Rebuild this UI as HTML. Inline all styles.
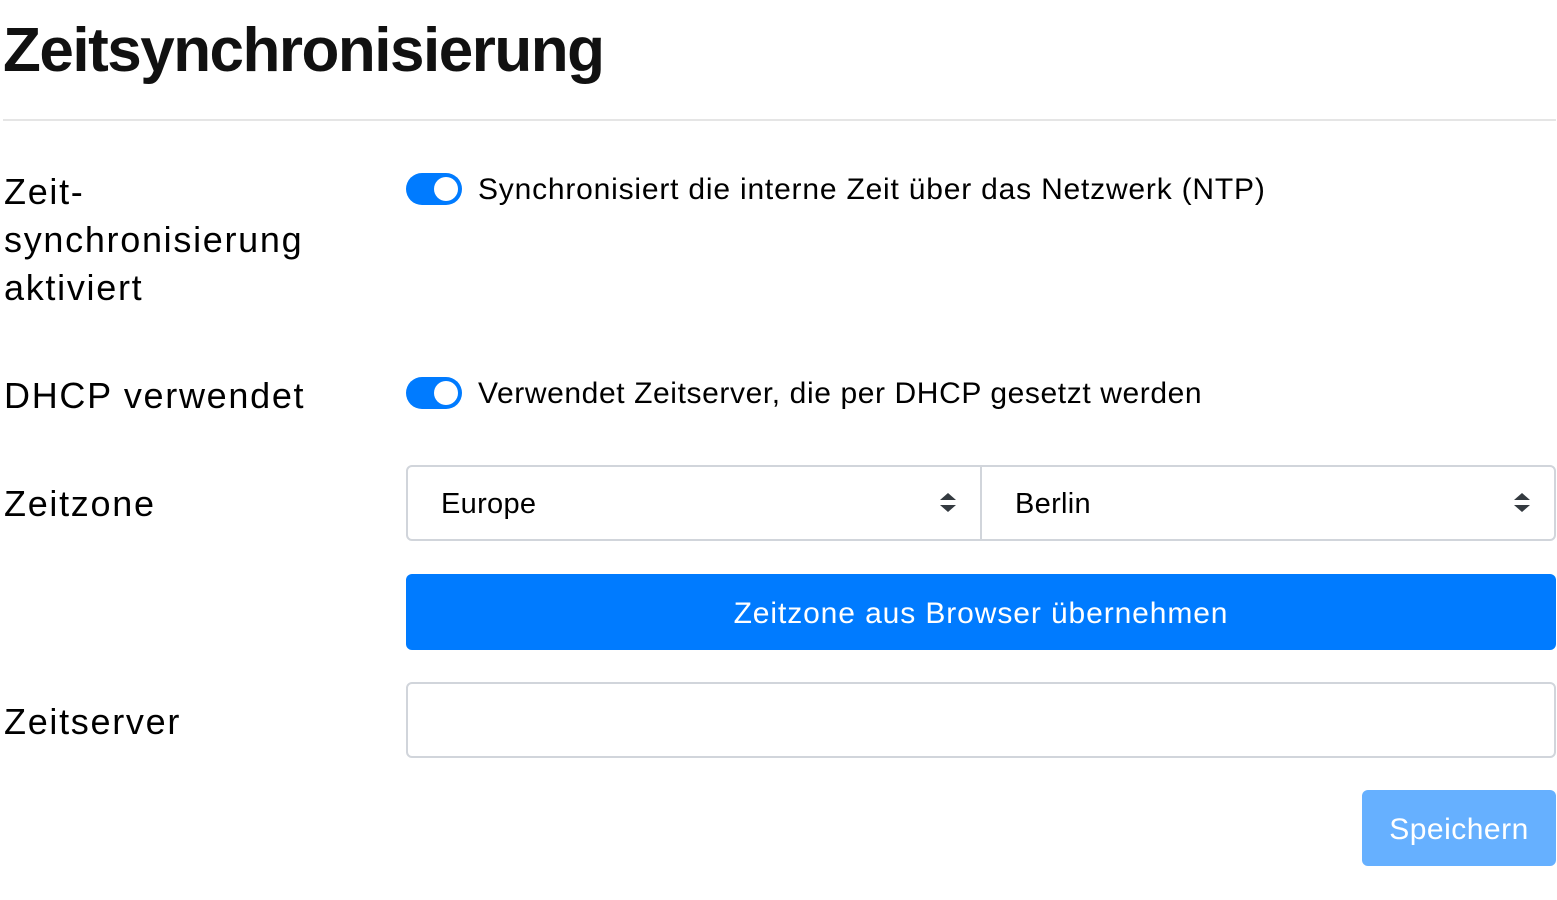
<!DOCTYPE html>
<html><head><meta charset="utf-8"><style>
body{margin:0;background:#fff;font-family:"Liberation Sans",sans-serif;color:#000;width:1557px;height:900px;overflow:hidden;position:relative}
.a{position:absolute}
h1{position:absolute;left:3px;top:14px;margin:0;font-size:62px;font-weight:bold;letter-spacing:-1.5px;line-height:74px;color:#111}
.hr{left:3px;top:119px;width:1553px;height:2px;background:#e5e5e5}
.lbl{font-size:36px;line-height:48px;left:4px;letter-spacing:1.7px}
.tg{width:56px;height:32px;border-radius:16px;background:#007bff}
.tg:after{content:"";position:absolute;right:4px;top:4px;width:24px;height:24px;border-radius:50%;background:#fff}
.desc{font-size:30px;line-height:34px;left:478px;letter-spacing:0.8px}
.box{border:2px solid #d1d5db;border-radius:6px;box-sizing:border-box}
.sel{font-size:29px;line-height:72px;letter-spacing:0.3px}
</style></head><body>
<h1>Zeitsynchronisierung</h1>
<div class="a hr"></div>
<div class="a lbl" style="top:168px">Zeit-<br>synchronisierung<br>aktiviert</div>
<div class="a tg" style="left:406px;top:173px"></div>
<div class="a desc" style="top:173px">Synchronisiert die interne Zeit über das Netzwerk (NTP)</div>
<div class="a lbl" style="top:372px">DHCP verwendet</div>
<div class="a tg" style="left:406px;top:377px"></div>
<div class="a desc" style="top:377px;letter-spacing:0.6px">Verwendet Zeitserver, die per DHCP gesetzt werden</div>
<div class="a lbl" style="top:480px">Zeitzone</div>
<div class="a box" style="left:406px;top:465px;width:1150px;height:76px"></div>
<div class="a" style="left:980px;top:467px;width:2px;height:72px;background:#d1d5db"></div>
<div class="a sel" style="left:441px;top:468px">Europe</div>
<div class="a sel" style="left:1015px;top:468px">Berlin</div>
<svg class="a" style="left:939px;top:492px" width="18" height="22"><path d="M1 8 L9 1 L17 8Z M1 13 L9 20 L17 13Z" fill="#343a40"/></svg>
<svg class="a" style="left:1513px;top:492px" width="18" height="22"><path d="M1 8 L9 1 L17 8Z M1 13 L9 20 L17 13Z" fill="#343a40"/></svg>
<div class="a" style="left:406px;top:574px;width:1150px;height:76px;background:#007bff;border-radius:6px;color:#fff;font-size:30px;line-height:80px;text-align:center;letter-spacing:0.9px">Zeitzone aus Browser übernehmen</div>
<div class="a lbl" style="top:698px">Zeitserver</div>
<div class="a box" style="left:406px;top:682px;width:1150px;height:76px"></div>
<div class="a" style="left:1362px;top:790px;width:194px;height:76px;background:#66b0ff;border-radius:6px;color:#fff;font-size:30px;line-height:80px;text-align:center;letter-spacing:0.5px">Speichern</div>
</body></html>
